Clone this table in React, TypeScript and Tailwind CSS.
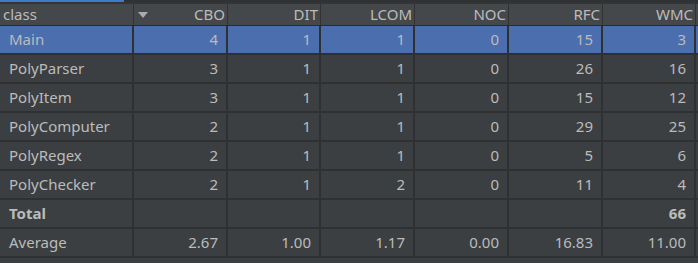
import React from "react";

type Row = { name: string; vals: string[]; bold?: boolean; selected?: boolean };

const cols = ["CBO", "DIT", "LCOM", "NOC", "RFC", "WMC"];
const colW = ["w-[94px]", "w-[93px]", "w-[94px]", "w-[94px]", "w-[94px]", "w-[93px]"];

const rows: Row[] = [
  { name: "Main", vals: ["4", "1", "1", "0", "15", "3"], selected: true },
  { name: "PolyParser", vals: ["3", "1", "1", "0", "26", "16"] },
  { name: "PolyItem", vals: ["3", "1", "1", "0", "15", "12"] },
  { name: "PolyComputer", vals: ["2", "1", "1", "0", "29", "25"] },
  { name: "PolyRegex", vals: ["2", "1", "1", "0", "5", "6"] },
  { name: "PolyChecker", vals: ["2", "1", "2", "0", "11", "4"] },
  { name: "Total", vals: ["", "", "", "", "", "66"], bold: true },
  { name: "Average", vals: ["2.67", "1.00", "1.17", "0.00", "16.83", "11.00"] },
];

export default function App() {
  return (
    <div
      className="w-[698px] h-[263px] bg-[#3c3f41] text-[#bbbbbb] overflow-hidden text-[15px] leading-none"
      style={{ fontFamily: '"Noto Sans", "Open Sans", sans-serif' }}
    >
      {/* scroll/tab strip */}
      <div className="h-[2px] flex bg-[#2f3133]">
        <div className="w-[124px] bg-[#3d7ac7]" />
      </div>
      <div className="h-[2px] bg-[#323436]" />

      {/* header */}
      <div className="flex h-[22px] bg-[#45484a] border-b border-[#2b2b2b]">
        <div className="w-[134px] flex items-center justify-between pl-[3px] pr-[6px] border-r border-[#323232] relative">
          <span>class</span>
          <svg width="10" height="6" viewBox="0 0 10 6" className="absolute left-[138px] top-[8px]">
            <path d="M0 0 H10 L5 6 Z" fill="#a9acae" />
          </svg>
        </div>
        {cols.map((c, i) => (
          <div
            key={c}
            className={`${colW[i]} flex items-center justify-end pr-[2px] border-r border-[#323232] ${i === 0 ? "pl-[14px]" : ""}`}
          >
            {c}
          </div>
        ))}
      </div>

      {/* body */}
      {rows.map((r) => (
        <div
          key={r.name}
          className={`flex h-[29px] border-b-2 border-[#2e3032] ${r.selected ? "bg-[#4b6eaf]" : ""} ${r.bold ? "font-bold" : ""}`}
        >
          <div className="w-[134px] flex items-center pl-[9px] border-r-2 border-[#2e3032]">{r.name}</div>
          {r.vals.map((v, i) => (
            <div
              key={i}
              className={`${colW[i]} flex items-center justify-end pr-[8px] border-r-2 border-[#2e3032]`}
            >
              {v}
            </div>
          ))}
        </div>
      ))}
    </div>
  );
}
